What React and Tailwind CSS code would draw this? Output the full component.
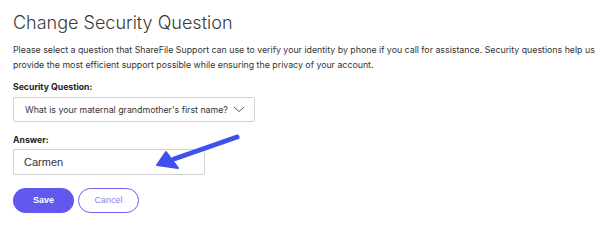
import React, { useState } from 'react';

const QUESTION = "What is your maternal grandmother's first name?";

const Arrow = () => (
    <svg
        className="absolute left-[150px] top-[128px] pointer-events-none"
        width="96"
        height="46"
        viewBox="0 0 96 46"
    >
        <line x1="87" y1="9" x2="24" y2="31" stroke="#3f50ef" strokeWidth="5" strokeLinecap="round" />
        <polygon points="7,37 16,24 28,40" fill="#3f50ef" stroke="#3f50ef" strokeWidth="2" strokeLinejoin="round" />
    </svg>
);

const App = () => {
    const [answer, setAnswer] = useState('Carmen');

    return (
        <div className="relative w-[601px] h-[225px] bg-white px-[13px] pt-[12px] font-['Inter',sans-serif] text-[#333]">
            <h1 className="text-[18px] font-light leading-[22px] text-[#3a3a3a]">
                Change Security Question
            </h1>

            <p className="mt-[9px] text-[8.8px] leading-[14.5px] text-[#333] w-[588px]">
                Please select a question that ShareFile Support can use to verify your identity by phone if you call for assistance. Security questions help us provide the most efficient support possible while ensuring the privacy of your account.
            </p>

            <label className="block mt-[9px] text-[8.7px] font-bold leading-[12px] text-[#222]">
                Security Question:
            </label>
            <div className="mt-[4px] w-[242px] h-[25px] border border-[#d2d2d2] rounded-[2px] flex items-center justify-between pl-[11px] pr-[9px]">
                <span className="text-[8.8px] text-[#333] whitespace-nowrap">{QUESTION}</span>
                <svg width="12" height="7" viewBox="0 0 12 7" fill="none">
                    <path d="M1 1 L6 5.5 L11 1" stroke="#555" strokeWidth="1" />
                </svg>
            </div>

            <label className="block mt-[12px] text-[8.7px] font-bold leading-[12px] text-[#222]">
                Answer:
            </label>
            <input
                value={answer}
                onChange={(e) => setAnswer(e.target.value)}
                className="mt-[3px] block w-[192px] h-[26px] border border-[#d2d2d2] rounded-[2px] px-[10px] text-[11px] text-[#333] font-['Liberation_Sans',sans-serif] outline-none"
            />

            <div className="mt-[13px] flex gap-[4px]">
                <button className="w-[61px] h-[25px] rounded-full bg-[#6159ef] text-white text-[9px] font-bold font-['Liberation_Sans',sans-serif]">
                    Save
                </button>
                <button className="w-[61px] h-[25px] rounded-full border border-[#6a62f0] bg-white text-[#8a84f2] text-[9px] font-['Liberation_Sans',sans-serif]">
                    Cancel
                </button>
            </div>

            <Arrow />
        </div>
    );
};

export default App;
